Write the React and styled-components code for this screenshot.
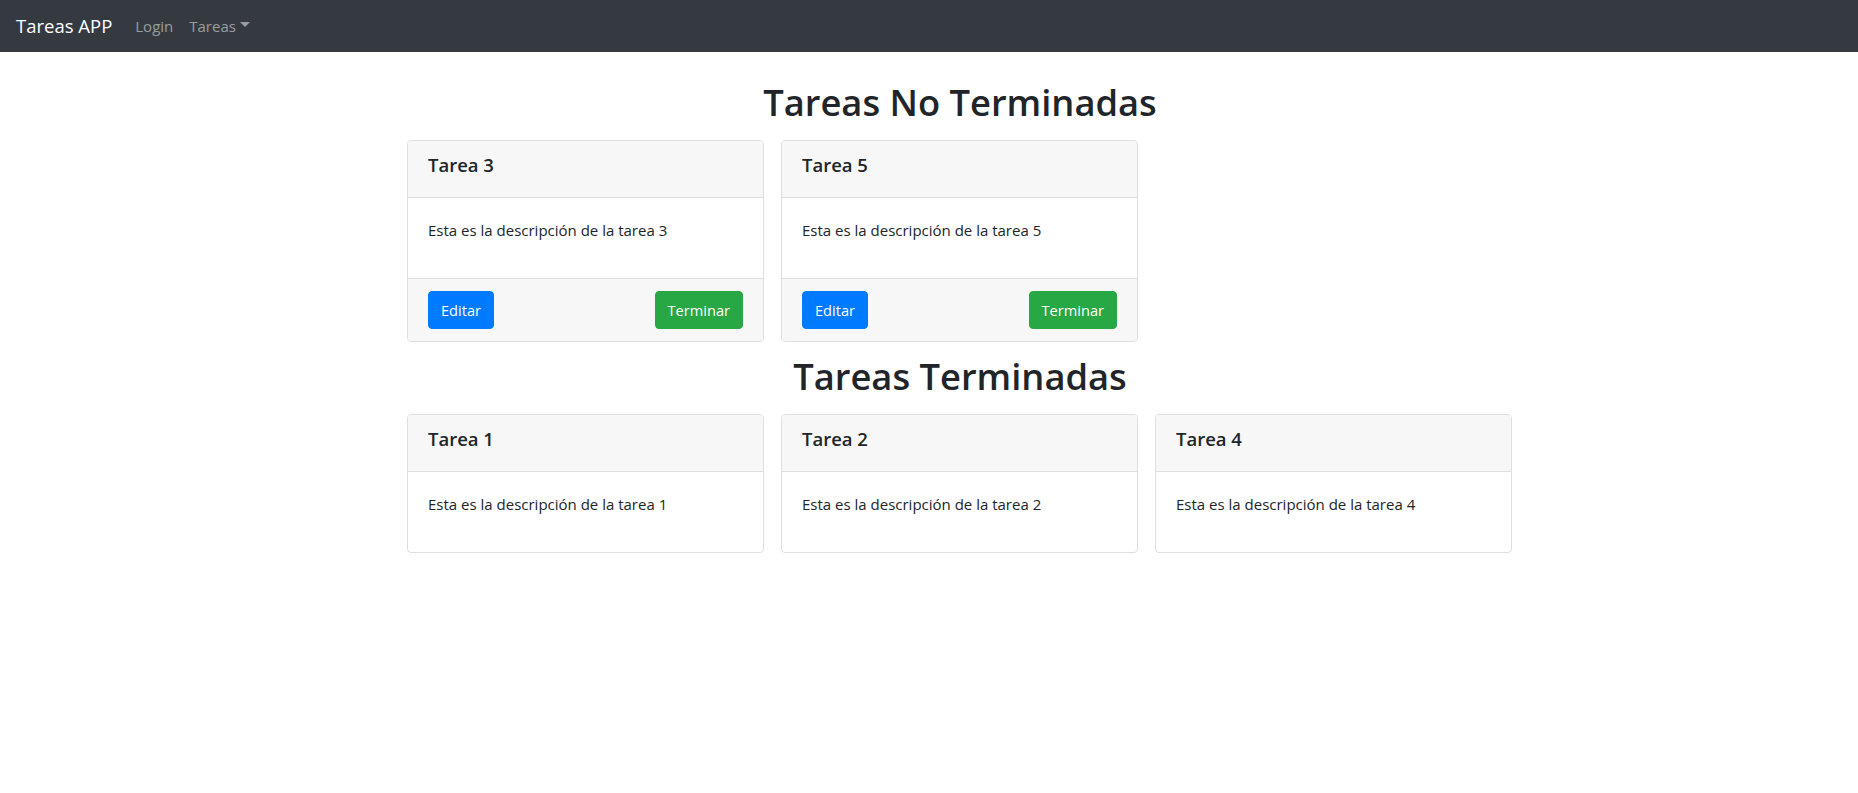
import React from "react";
import styled, { createGlobalStyle } from "styled-components";

const GlobalStyle = createGlobalStyle`
  html, body { margin: 0; padding: 0; background: #fff; }
  body {
    font-family: "Open Sans", "Noto Sans", "Liberation Sans", sans-serif;
    font-size: 15px;
    line-height: 24px;
    color: #212529;
  }
  * { box-sizing: border-box; }
`;

const Navbar = styled.nav`
  height: 52px;
  background: #343a40;
  display: flex;
  align-items: center;
  padding: 0 16px;
`;

const Brand = styled.a`
  color: #fff;
  font-size: 18.5px;
  line-height: 30px;
  margin-right: 15px;
  text-decoration: none;
`;

const NavLink = styled.a`
  color: rgba(255, 255, 255, 0.5);
  font-size: 15px;
  padding: 0 8px;
  text-decoration: none;
  display: inline-flex;
  align-items: center;
`;

const Caret = styled.span`
  display: inline-block;
  margin-left: 4px;
  margin-top: -3px;
  border-top: 5px solid rgba(255, 255, 255, 0.5);
  border-left: 5px solid transparent;
  border-right: 5px solid transparent;
`;

const Page = styled.main`
  width: 1106px;
  margin-left: calc(50% - 522px);
  padding-top: 16px;
`;

const Section = styled.section`
  display: flex;
  flex-direction: column;
`;

const SectionTitle = styled.h1`
  margin: 10px 0 14px;
  text-align: center;
  font-size: 36.3px;
  line-height: 48px;
  font-weight: 600;
  color: #212529;
`;

const CardGrid = styled.div`
  display: grid;
  grid-template-columns: repeat(3, 357px);
  column-gap: 17px;
  row-gap: 16px;
`;

const Card = styled.div`
  display: flex;
  flex-direction: column;
  border: 1px solid #dfdfdf;
  border-radius: 4px;
  background: #fff;
  overflow: hidden;
`;

const CardHeader = styled.div`
  padding: 12px 20px;
  background: #f7f7f7;
  border-bottom: 1px solid #dfdfdf;
`;

const CardTitle = styled.h5`
  margin: 0 0 8px;
  font-size: 18.5px;
  line-height: 24px;
  font-weight: 600;
  color: #212529;
`;

const CardBody = styled.div`
  padding: 20px;
`;

const CardText = styled.p`
  margin: 0 0 16px;
  font-size: 15px;
  line-height: 24px;
`;

const CardFooter = styled.div`
  display: flex;
  justify-content: space-between;
  align-items: center;
  padding: 12px 20px;
  background: #f7f7f7;
  border-top: 1px solid #dfdfdf;
`;

const Button = styled.button`
  height: 38px;
  padding: 0 12px;
  font-family: inherit;
  font-size: 14.6px;
  line-height: 24px;
  color: #fff;
  background: ${(p) => (p.$variant === "success" ? "#28a745" : "#007bff")};
  border: 1px solid ${(p) => (p.$variant === "success" ? "#28a745" : "#007bff")};
  border-radius: 4px;
  cursor: pointer;
`;

const pending = [
  { id: 3, title: "Tarea 3", desc: "Esta es la descripción de la tarea 3" },
  { id: 5, title: "Tarea 5", desc: "Esta es la descripción de la tarea 5" },
];

const done = [
  { id: 1, title: "Tarea 1", desc: "Esta es la descripción de la tarea 1" },
  { id: 2, title: "Tarea 2", desc: "Esta es la descripción de la tarea 2" },
  { id: 4, title: "Tarea 4", desc: "Esta es la descripción de la tarea 4" },
];

function TaskCard({ task, actions }) {
  return (
    <Card>
      <CardHeader>
        <CardTitle>{task.title}</CardTitle>
      </CardHeader>
      <CardBody>
        <CardText>{task.desc}</CardText>
      </CardBody>
      {actions && (
        <CardFooter>
          <Button $variant="primary">Editar</Button>
          <Button $variant="success">Terminar</Button>
        </CardFooter>
      )}
    </Card>
  );
}

export default function App() {
  return (
    <>
      <GlobalStyle />
      <Navbar>
        <Brand href="#">Tareas APP</Brand>
        <NavLink href="#">Login</NavLink>
        <NavLink href="#">
          Tareas
          <Caret />
        </NavLink>
      </Navbar>
      <Page>
        <Section>
          <SectionTitle>Tareas No Terminadas</SectionTitle>
          <CardGrid>
            {pending.map((t) => (
              <TaskCard key={t.id} task={t} actions />
            ))}
          </CardGrid>
        </Section>
        <Section>
          <SectionTitle>Tareas Terminadas</SectionTitle>
          <CardGrid>
            {done.map((t) => (
              <TaskCard key={t.id} task={t} />
            ))}
          </CardGrid>
        </Section>
      </Page>
    </>
  );
}
